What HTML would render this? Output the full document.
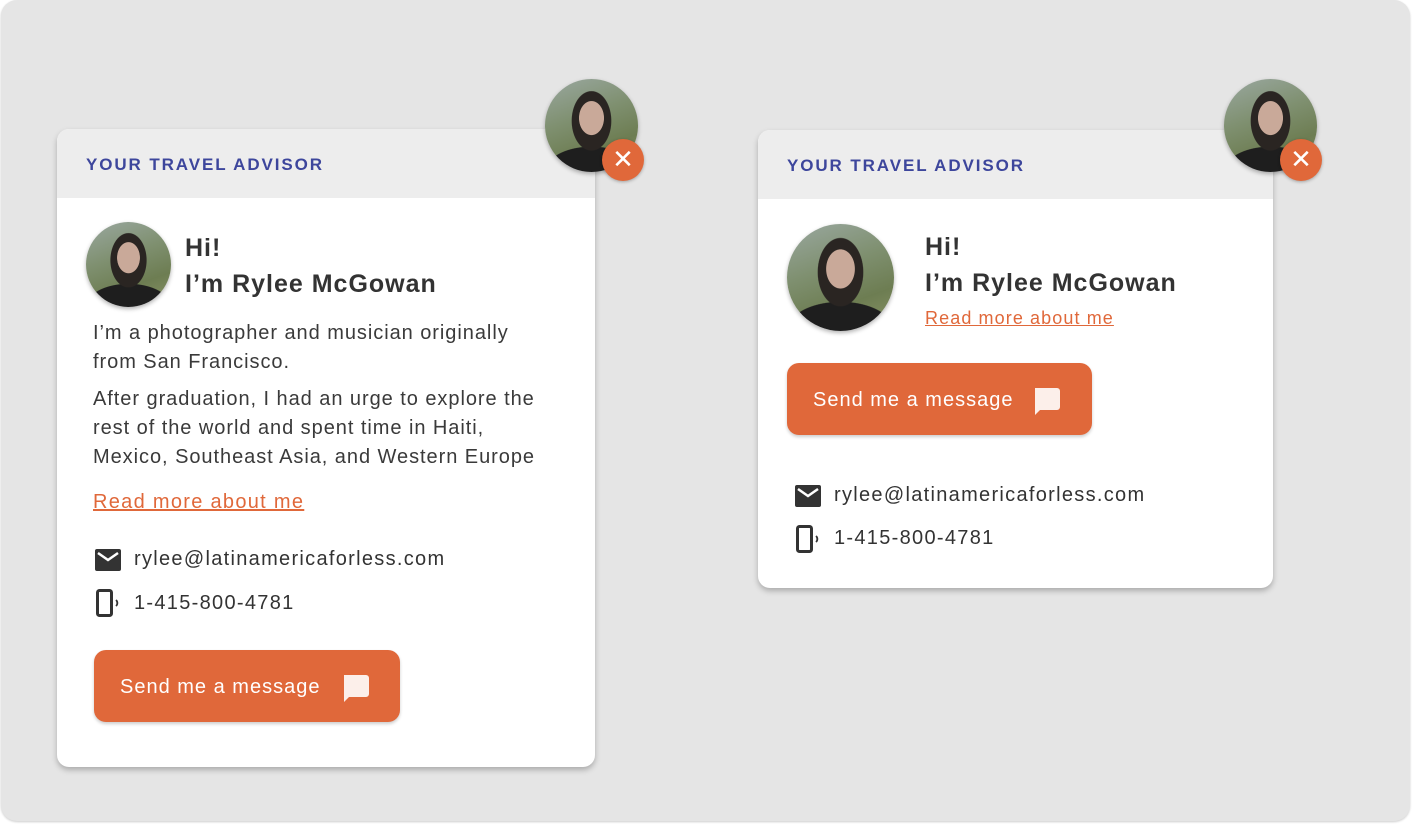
<!DOCTYPE html>
<html><head><meta charset="utf-8"><style>
*{margin:0;padding:0;box-sizing:border-box}
body{width:1412px;height:824px;background:#fff;font-family:"Liberation Sans",sans-serif;color:#333;position:relative;overflow:hidden}
.bg{position:absolute;left:1px;top:0;width:1409px;height:821px;background:#e5e5e5;border-radius:16px;box-shadow:0 1px 2px rgba(0,0,0,.2)}
.card{position:absolute;background:#fff;border-radius:12px;box-shadow:0 3px 6px rgba(0,0,0,.25);overflow:hidden}
.hd{background:#ededed;height:69px;padding-left:29px;line-height:72px;font-weight:bold;font-size:17px;letter-spacing:1.9px;color:#3d469c}
.av{position:absolute;border-radius:50%;background:
radial-gradient(ellipse 22% 30% at 50% 42%,#c9a999 0 60%,transparent 62%),
radial-gradient(ellipse 30% 45% at 50% 45%,#2a2522 0 70%,transparent 72%),
radial-gradient(ellipse 55% 30% at 50% 100%,#1e1e1e 0 90%,transparent 92%),
linear-gradient(160deg,#9aa8a0 0%,#7f9070 40%,#6d7d52 70%,#8a9466 100%);box-shadow:0 2px 4px rgba(0,0,0,.3)}
.x{position:absolute;width:42px;height:42px;border-radius:50%;background:#e0683a;color:#fff;font-size:26px;text-align:center;line-height:41px;box-shadow:0 1px 3px rgba(0,0,0,.3)}
.name{position:absolute;font-weight:bold;font-size:25px;line-height:36px;color:#333;letter-spacing:1px}
.p{position:absolute;font-size:20px;line-height:29px;color:#3a3a3a;letter-spacing:0.95px;white-space:nowrap}
.lnk{position:absolute;color:#e0683a;text-decoration:underline;font-size:20px;letter-spacing:1.3px}
.ct{position:absolute;font-size:20px;color:#333;letter-spacing:1.3px}
.btn{position:absolute;background:#e0683a;color:#fff;border-radius:12px;font-size:20px;box-shadow:0 2px 3px rgba(0,0,0,.2);letter-spacing:1px}
.btn span{position:absolute;top:0;line-height:74px}
.btn svg{position:absolute}
</style></head><body>
<div class="bg"></div>

<div class="card" style="left:57px;top:129px;width:538px;height:638px">
<div class="hd">YOUR TRAVEL ADVISOR</div>
</div>
<div class="av" style="left:545px;top:79px;width:93px;height:93px"></div>
<div class="x" style="left:602px;top:139px">✕</div>
<div class="av" style="left:86px;top:222px;width:85px;height:85px"></div>
<div class="name" style="left:185px;top:230px">Hi!<br>I’m Rylee McGowan</div>
<div class="p" style="left:93px;top:319px">I’m a photographer and musician originally<br>from San Francisco.</div>
<div class="p" style="left:93px;top:385px">After graduation, I had an urge to explore the<br>rest of the world and spent time in Haiti,<br>Mexico, Southeast Asia, and Western Europe</div>
<div class="lnk" style="left:93px;top:491px">Read more about me</div>
<svg style="position:absolute;left:95px;top:549px" width="26" height="22" viewBox="0 0 26 22"><rect x="0" y="0" width="26" height="22" rx="2" fill="#333"/><path d="M3 4l10 7 10-7" stroke="#fff" stroke-width="2.5" fill="none"/></svg>
<div class="ct" style="left:134px;top:548px">rylee@latinamericaforless.com</div>
<svg style="position:absolute;left:96px;top:589px" width="28" height="28" viewBox="0 0 28 28"><rect x="1.5" y="1.5" width="14" height="25" rx="2" fill="none" stroke="#333" stroke-width="3"/><path d="M20 11a4 4 0 0 1 0 6" stroke="#333" stroke-width="1.8" fill="none"/></svg>
<div class="ct" style="left:134px;top:592px">1-415-800-4781</div>
<div class="btn" style="left:94px;top:650px;width:306px;height:72px"><span style="left:26px">Send me a message</span>
<svg style="left:247px;top:25px" width="28" height="28" viewBox="0 0 28 28"><path d="M3 0h22a3 3 0 0 1 3 3v16a3 3 0 0 1-3 3H8l-5 5z" fill="#fcefea"/></svg></div>

<div class="card" style="left:758px;top:130px;width:515px;height:458px">
<div class="hd">YOUR TRAVEL ADVISOR</div>
</div>
<div class="av" style="left:1224px;top:79px;width:93px;height:93px"></div>
<div class="x" style="left:1280px;top:139px">✕</div>
<div class="av" style="left:787px;top:224px;width:107px;height:107px"></div>
<div class="name" style="left:925px;top:229px">Hi!<br>I’m Rylee McGowan</div>
<div class="lnk" style="left:925px;top:308px;font-size:18px;letter-spacing:1.1px">Read more about me</div>
<div class="btn" style="left:787px;top:363px;width:305px;height:72px"><span style="left:26px">Send me a message</span>
<svg style="left:245px;top:25px" width="28" height="28" viewBox="0 0 28 28"><path d="M3 0h22a3 3 0 0 1 3 3v16a3 3 0 0 1-3 3H8l-5 5z" fill="#fcefea"/></svg></div>
<svg style="position:absolute;left:795px;top:485px" width="26" height="22" viewBox="0 0 26 22"><rect x="0" y="0" width="26" height="22" rx="2" fill="#333"/><path d="M3 4l10 7 10-7" stroke="#fff" stroke-width="2.5" fill="none"/></svg>
<div class="ct" style="left:834px;top:484px">rylee@latinamericaforless.com</div>
<svg style="position:absolute;left:796px;top:525px" width="28" height="28" viewBox="0 0 28 28"><rect x="1.5" y="1.5" width="14" height="25" rx="2" fill="none" stroke="#333" stroke-width="3"/><path d="M20 11a4 4 0 0 1 0 6" stroke="#333" stroke-width="1.8" fill="none"/></svg>
<div class="ct" style="left:834px;top:527px">1-415-800-4781</div>
</body></html>
